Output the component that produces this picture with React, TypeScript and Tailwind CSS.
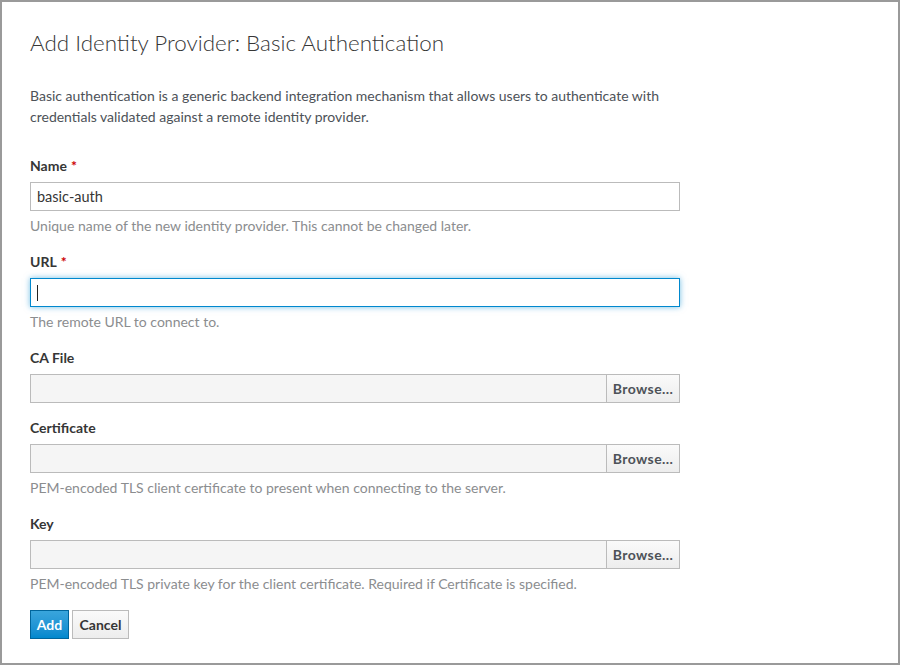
const FONT = "font-['Lato','Liberation_Sans',sans-serif]";

function Label({ text, required }: { text: string; required?: boolean }) {
  return (
    <div className="h-[20px] leading-[20px] text-[14px] font-bold text-[#363636] mb-[6px]">
      {text}
      {required && <span className="text-[#c00] ml-[4px]">*</span>}
    </div>
  );
}

function Help({ text }: { text: string }) {
  return (
    <div className="mt-[5px] h-[20px] leading-[20px] text-[14px] text-[#8b8d8f]">
      {text}
    </div>
  );
}

function FileField() {
  return (
    <div className="flex h-[29px]">
      <div className="flex-1 bg-[#f5f5f5] border border-[#bbb] border-r-0" />
      <button className="w-[74px] border border-[#bbb] bg-gradient-to-b from-[#fafafa] to-[#ededed] text-[14px] tracking-[0.4px] font-bold text-[#4d5258] leading-none">
        Browse...
      </button>
    </div>
  );
}

export default function App() {
  return (
    <div className={`${FONT} w-[900px] h-[665px] border-2 border-[#9a9a9a] bg-white pl-[28px] pt-[28px]`}>
      <div className="w-[650px]">
        <h1 className="text-[22.4px] leading-[26px] font-light text-[#363636]">
          Add Identity Provider: Basic Authentication
        </h1>

        <p className="mt-[29px] text-[14px] leading-[21px] text-[#4d5258]">
          Basic authentication is a generic backend integration mechanism that allows users to authenticate with
          credentials validated against a remote identity provider.
        </p>

        {/* Name */}
        <div className="mt-[29px]">
          <Label text="Name" required />
          <div className="h-[29px] border border-[#bbb] px-[6px] flex items-center text-[14.5px] text-[#363636]">
            basic-auth
          </div>
          <Help text="Unique name of the new identity provider. This cannot be changed later." />
        </div>

        {/* URL */}
        <div className="mt-[16px]">
          <Label text="URL" required />
          <div className="h-[29px] border border-[#0088ce] shadow-[0_0_6px_rgba(0,136,206,0.55)] px-[6px] flex items-center">
            <span className="w-px h-[16px] bg-[#222]" />
          </div>
          <Help text="The remote URL to connect to." />
        </div>

        {/* CA File */}
        <div className="mt-[16px]">
          <Label text="CA File" />
          <FileField />
        </div>

        {/* Certificate */}
        <div className="mt-[15px]">
          <Label text="Certificate" />
          <FileField />
          <Help text="PEM-encoded TLS client certificate to present when connecting to the server." />
        </div>

        {/* Key */}
        <div className="mt-[16px]">
          <Label text="Key" />
          <FileField />
          <Help text="PEM-encoded TLS private key for the client certificate. Required if Certificate is specified." />
        </div>

        <div className="mt-[16px] flex gap-[3px]">
          <button className="h-[29px] w-[39px] border border-[#00659c] bg-gradient-to-b from-[#39a5dc] to-[#0088ce] text-white text-[14px] font-bold">
            Add
          </button>
          <button className="h-[29px] w-[57px] border border-[#bbb] bg-gradient-to-b from-[#fafafa] to-[#ededed] text-[#363636] text-[14px] font-bold">
            Cancel
          </button>
        </div>
      </div>
    </div>
  );
}
